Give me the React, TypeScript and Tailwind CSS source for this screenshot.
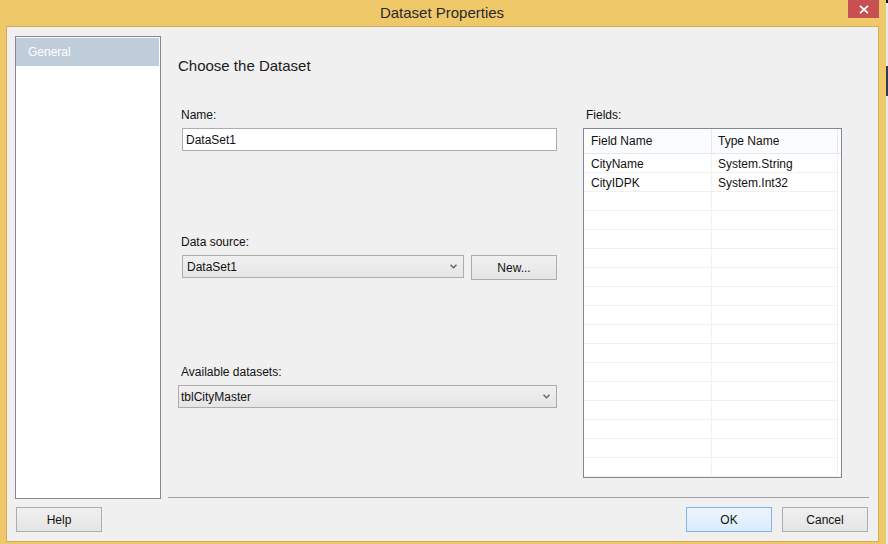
import React from 'react';

const FONT = { fontFamily: '"Liberation Sans", Arial, sans-serif' };

const fields: { name: string; type: string }[] = [
  { name: 'CityName', type: 'System.String' },
  { name: 'CityIDPK', type: 'System.Int32' },
];

const Chevron: React.FC = () => (
  <svg width="7" height="5" viewBox="0 0 7 5" className="shrink-0">
    <path d="M0.5 0.8 L3.5 3.8 L6.5 0.8" fill="none" stroke="#666" strokeWidth="1.5" />
  </svg>
);

interface ComboProps {
  value: string;
  className?: string;
  padLeft?: string;
}

const Combo: React.FC<ComboProps> = ({ value, className = '', padLeft = 'pl-[4px]' }) => (
  <div
    className={`h-[23px] flex items-center justify-between border border-[#acacac] bg-gradient-to-b from-[#f0f0f0] to-[#e5e5e5] pr-[6px] ${padLeft} ${className}`}
  >
    <span className="text-[12px] text-[#111]">{value}</span>
    <Chevron />
  </div>
);

interface DlgButtonProps {
  label: string;
  primary?: boolean;
  className?: string;
}

const DlgButton: React.FC<DlgButtonProps> = ({ label, primary, className = '' }) => (
  <button
    type="button"
    className={`w-[86px] h-[25px] flex items-center justify-center text-[12px] text-[#111] border ${
      primary
        ? 'border-[#7eb4ea] bg-gradient-to-b from-[#ecf4fc] to-[#dcecfc]'
        : 'border-[#adadad] bg-gradient-to-b from-[#f0f0f0] to-[#e5e5e5]'
    } ${className}`}
  >
    {label}
  </button>
);

const FieldsGrid: React.FC = () => {
  const rows = Array.from({ length: 17 }, (_, i) => fields[i] ?? { name: '', type: '' });
  return (
    <div className="h-[350px] border border-[#828790] bg-white overflow-hidden">
      <div className="flex h-[25px] border-b border-[#e3e9ef] bg-[#fbfcfe]">
        <div className="w-[128px] flex items-center pl-[7px] border-r border-[#e3e9ef] text-[12px] text-[#111]">
          Field Name
        </div>
        <div className="w-[126px] flex items-center pl-[6px] border-r border-[#e3e9ef] text-[12px] text-[#111]">
          Type Name
        </div>
      </div>
      {rows.map((r, i) => (
        <div key={i} className="flex h-[19px]">
          <div className="w-[128px] flex items-center pl-[7px] pt-[1px] border-r border-b border-[#f0f0f0] text-[12px] text-[#111]">
            {r.name}
          </div>
          <div className="w-[126px] flex items-center pl-[6px] pt-[1px] border-r border-b border-[#f0f0f0] text-[12px] text-[#111]">
            {r.type}
          </div>
        </div>
      ))}
    </div>
  );
};

export default function App() {
  return (
    <div className="w-[888px] h-[544px] flex overflow-hidden" style={FONT}>
      <div className="w-[886px] h-[544px] bg-[#efc86a] flex flex-col pl-[6px] pr-[7px] pb-[2px]">
        {/* title bar */}
        <div className="h-[26px] flex items-start -mr-[7px] -ml-[6px]">
          <div className="flex-1 h-[26px] flex items-center justify-center pl-[36px]">
            <span className="text-[15px] text-[#2a2a2a]">Dataset Properties</span>
          </div>
          <div className="w-[31px] h-[18px] mr-[7px] bg-[#c75050] flex items-center justify-center">
            <svg width="10" height="9" viewBox="0 0 10 9">
              <path d="M1 0.8 L9 8.2 M9 0.8 L1 8.2" stroke="#fff" strokeWidth="1.8" />
            </svg>
          </div>
        </div>

        {/* dialog body */}
        <div className="flex-1 border border-[#d4ae57] bg-[#f0f0f0] flex flex-col">
          <div className="flex pl-[8px] pt-[9px] pr-[9px]">
            <div className="w-[146px] h-[463px] border border-[#828790] bg-white pt-[1px]">
              <div className="h-[28px] bg-[#bfcddb] flex items-center pl-[12px] mr-[1px]">
                <span className="text-[12px] text-white">General</span>
              </div>
            </div>

            <div className="flex-1 ml-[7px] h-[462px] border-b border-[#a0a0a0] flex flex-col">
              <div className="pl-[10px] pt-[20px] h-[40px] leading-[20px] text-[15px] text-[#1b1b1b]">
                Choose the Dataset
              </div>

              <div className="flex pl-[10px] mt-[31px]">
                {/* left column */}
                <div className="w-[379px] flex flex-col">
                  <div className="h-[16px] leading-[16px] pl-[3px] text-[12px] text-[#111]">Name:</div>
                  <div className="mt-[5px] ml-[4px] h-[23px] border border-[#abadb3] bg-white flex items-center pl-[3px] text-[12px] text-[#111]">
                    DataSet1
                  </div>

                  <div className="mt-[83px] h-[16px] leading-[16px] pl-[3px] text-[12px] text-[#111]">Data source:</div>
                  <div className="mt-[5px] ml-[4px] flex items-start">
                    <Combo value="DataSet1" className="w-[282px]" />
                    <DlgButton label="New..." className="ml-[7px] w-[85px]" />
                  </div>

                  <div className="mt-[84px] h-[16px] leading-[16px] pl-[3px] text-[12px] text-[#111]">
                    Available datasets:
                  </div>
                  <Combo value="tblCityMaster" className="mt-[5px] w-[379px]" padLeft="pl-[2px]" />
                </div>

                {/* right column */}
                <div className="w-[259px] ml-[26px] flex flex-col">
                  <div className="h-[16px] leading-[16px] pl-[3px] text-[12px] text-[#111]">Fields:</div>
                  <div className="mt-[5px]">
                    <FieldsGrid />
                  </div>
                </div>
              </div>
            </div>
          </div>

          <div className="flex items-center pt-[8px] pl-[9px] pr-[10px]">
            <DlgButton label="Help" />
            <div className="flex-1" />
            <DlgButton label="OK" primary />
            <DlgButton label="Cancel" className="ml-[10px]" />
          </div>
        </div>
      </div>

      {/* sliver of the window behind */}
      <div className="w-[2px] h-[544px] flex flex-col bg-[#e6e8ec]">
        <div className="h-[3px] bg-[#1a1a1a]" />
        <div className="h-[63px]" />
        <div className="h-[30px] bg-[#2b3a55]" />
        <div className="flex-1" />
      </div>
    </div>
  );
}
